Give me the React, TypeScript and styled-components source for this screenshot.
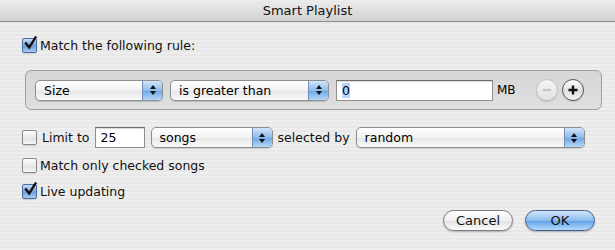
import styled, { createGlobalStyle } from 'styled-components'

const Global = createGlobalStyle`
  html, body {
    margin: 0;
    padding: 0;
    background: #ececec;
  }
  body {
    font-family: "DejaVu Sans", "Liberation Sans", sans-serif;
    font-size: 12px;
    color: #000;
  }
`

function Checkbox({ checked }: { checked?: boolean }) {
  return (
    <Box $checked={checked}>
      {checked && (
        <svg width="15" height="15" viewBox="0 0 15 15" style={{ position: 'absolute', left: 0, top: -3 }}>
          <path d="M3 7.5 L6.2 11.5 L12.5 1.5" stroke="#111" strokeWidth="2.4" fill="none" strokeLinecap="square" />
        </svg>
      )}
    </Box>
  )
}

function Popup({ label, width }: { label: string; width: number }) {
  return (
    <PopupBox style={{ width }}>
      <PopupLabel>{label}</PopupLabel>
      <PopupArrows>
        <svg width="8" height="12" viewBox="0 0 8 12">
          <path d="M4 1 L7 5 L1 5 Z" fill="#111" />
          <path d="M4 11 L7 7 L1 7 Z" fill="#111" />
        </svg>
      </PopupArrows>
    </PopupBox>
  )
}

export default function App() {
  return (
    <>
      <Global />
      <Window>
        <TitleBar>Smart Playlist</TitleBar>
        <Body>
          <CheckRow>
            <Checkbox checked />
            <Label>Match the following rule:</Label>
          </CheckRow>
          <RuleBox>
            <Popup label="Size" width={128} />
            <Popup label="is greater than" width={159} />
            <TextField style={{ width: 157 }}>
              <Selected>0</Selected>
            </TextField>
            <Unit>MB</Unit>
            <RoundButtons>
              <RoundButton $disabled>
                <svg width="12" height="12" viewBox="0 0 12 12">
                  <path d="M2 6 H10" stroke="#c4c4c4" strokeWidth="2.2" />
                </svg>
              </RoundButton>
              <RoundButton>
                <svg width="12" height="12" viewBox="0 0 12 12">
                  <path d="M1.5 6 H10.5 M6 1.5 V10.5" stroke="#111" strokeWidth="2.4" />
                </svg>
              </RoundButton>
            </RoundButtons>
          </RuleBox>
          <LimitRow>
            <Checkbox />
            <Label>Limit to</Label>
            <TextField style={{ width: 50 }}>25</TextField>
            <Popup label="songs" width={122} />
            <Label>selected by</Label>
            <Popup label="random" width={229} />
          </LimitRow>
          <CheckRow $top={8}>
            <Checkbox />
            <Label>Match only checked songs</Label>
          </CheckRow>
          <CheckRow $top={8}>
            <Checkbox checked />
            <Label>Live updating</Label>
          </CheckRow>
          <Buttons>
            <PillButton>Cancel</PillButton>
            <PillButton $primary>OK</PillButton>
          </Buttons>
        </Body>
      </Window>
    </>
  )
}

const Window = styled.div`
  width: 615px;
  height: 250px;
  overflow: hidden;
  background: repeating-linear-gradient(
    to bottom,
    #eeeeee 0px,
    #eeeeee 2px,
    #e8e8e8 2px,
    #e8e8e8 4px
  );
`

const TitleBar = styled.div`
  height: 21px;
  line-height: 21px;
  text-align: center;
  font-size: 13px;
  color: #111;
  background: linear-gradient(to bottom, #ececec, #d2d2d2);
  border-bottom: 1px solid #8c8c8c;
  border-radius: 5px 5px 0 0;
`

const Body = styled.div`
  padding: 14px 22px 0 22px;
  display: flex;
  flex-direction: column;
`

const CheckRow = styled.div<{ $top?: number }>`
  display: flex;
  align-items: center;
  gap: 3px;
  height: 18px;
  margin-top: ${p => p.$top ?? 0}px;
`

const Box = styled.span<{ $checked?: boolean }>`
  position: relative;
  width: 13px;
  height: 13px;
  flex: none;
  border: 1px solid ${p => (p.$checked ? '#4b6d9c' : '#8a8a8a')};
  border-radius: 2px;
  background: ${p =>
    p.$checked
      ? 'linear-gradient(to bottom, #c6dcf5, #6e9fdc 55%, #a9ccf2)'
      : 'linear-gradient(to bottom, #ffffff, #e4e4e4 60%, #f6f6f6)'};
  box-shadow: 0 1px 1px rgba(0, 0, 0, 0.12);
`

const Label = styled.span`
  font-size: 12.5px;
  white-space: nowrap;
  color: #111;
`

const RuleBox = styled.div`
  margin: 16px 0 0 3px;
  width: 566px;
  height: 38px;
  box-sizing: content-box;
  border: 1px solid #9f9f9f;
  border-radius: 6px;
  background: linear-gradient(to bottom, #d6d6d6, #dfdfdf);
  display: flex;
  align-items: center;
  padding-left: 9px;
  gap: 7px;
`

const PopupBox = styled.div`
  height: 21px;
  box-sizing: border-box;
  display: flex;
  align-items: stretch;
  border: 1px solid #8d8d8d;
  border-radius: 5px;
  overflow: hidden;
  background: linear-gradient(to bottom, #ffffff, #f1f1f1 50%, #e6e6e6 51%, #f9f9f9);
  box-shadow: 0 1px 1px rgba(0, 0, 0, 0.15);
  flex: none;
`

const PopupLabel = styled.span`
  flex: 1;
  padding-left: 8px;
  font-size: 12.5px;
  line-height: 19px;
  white-space: nowrap;
  overflow: hidden;
`

const PopupArrows = styled.span`
  width: 19px;
  display: flex;
  align-items: center;
  justify-content: center;
  border-left: 1px solid #6f8db8;
  background: linear-gradient(to bottom, #d2e5fa, #8fbbeb 50%, #6aa4e6 51%, #b6d8f8);
`

const TextField = styled.div`
  height: 21px;
  box-sizing: border-box;
  border: 1px solid #8f8f8f;
  border-top-color: #6e6e6e;
  background: #fff;
  font-size: 12.5px;
  line-height: 19px;
  padding-left: 5px;
  flex: none;
  box-shadow: inset 0 1px 1px rgba(0, 0, 0, 0.15);
`

const Selected = styled.span`
  background: #b5d5ff;
`

const Unit = styled.span`
  font-size: 12px;
  margin-left: -3px;
  width: 30px;
`

const RoundButtons = styled.div`
  display: flex;
  gap: 4px;
  margin-left: 2px;
`

const RoundButton = styled.span<{ $disabled?: boolean }>`
  width: 20px;
  height: 20px;
  border-radius: 50%;
  display: flex;
  align-items: center;
  justify-content: center;
  border: 1px solid ${p => (p.$disabled ? '#c2c2c2' : '#555')};
  background: ${p =>
    p.$disabled
      ? 'linear-gradient(to bottom, #f4f4f4, #e2e2e2)'
      : 'linear-gradient(to bottom, #ffffff, #e0e0e0 55%, #f4f4f4)'};
  box-shadow: 0 1px 1px rgba(0, 0, 0, 0.15);
`

const LimitRow = styled.div`
  display: flex;
  align-items: center;
  gap: 5px;
  margin-top: 17px;
  height: 21px;
  & > ${PopupBox} {
    margin-left: 1px;
  }
`

const Buttons = styled.div`
  display: flex;
  justify-content: flex-end;
  gap: 12px;
  margin-top: 10px;
  width: 573px;
`

const PillButton = styled.span<{ $primary?: boolean }>`
  width: 70px;
  height: 21px;
  box-sizing: border-box;
  border-radius: 11px;
  display: flex;
  align-items: center;
  justify-content: center;
  font-size: 13px;
  color: #111;
  border: 1px solid ${p => (p.$primary ? '#3f5f8f' : '#7d7d7d')};
  background: ${p =>
    p.$primary
      ? 'linear-gradient(to bottom, #d3e6fb, #8cbcef 50%, #5e9fe8 51%, #b5dafc)'
      : 'linear-gradient(to bottom, #ffffff, #f0f0f0 50%, #e2e2e2 51%, #fafafa)'};
  box-shadow: 0 1px 2px rgba(0, 0, 0, 0.25);
`
